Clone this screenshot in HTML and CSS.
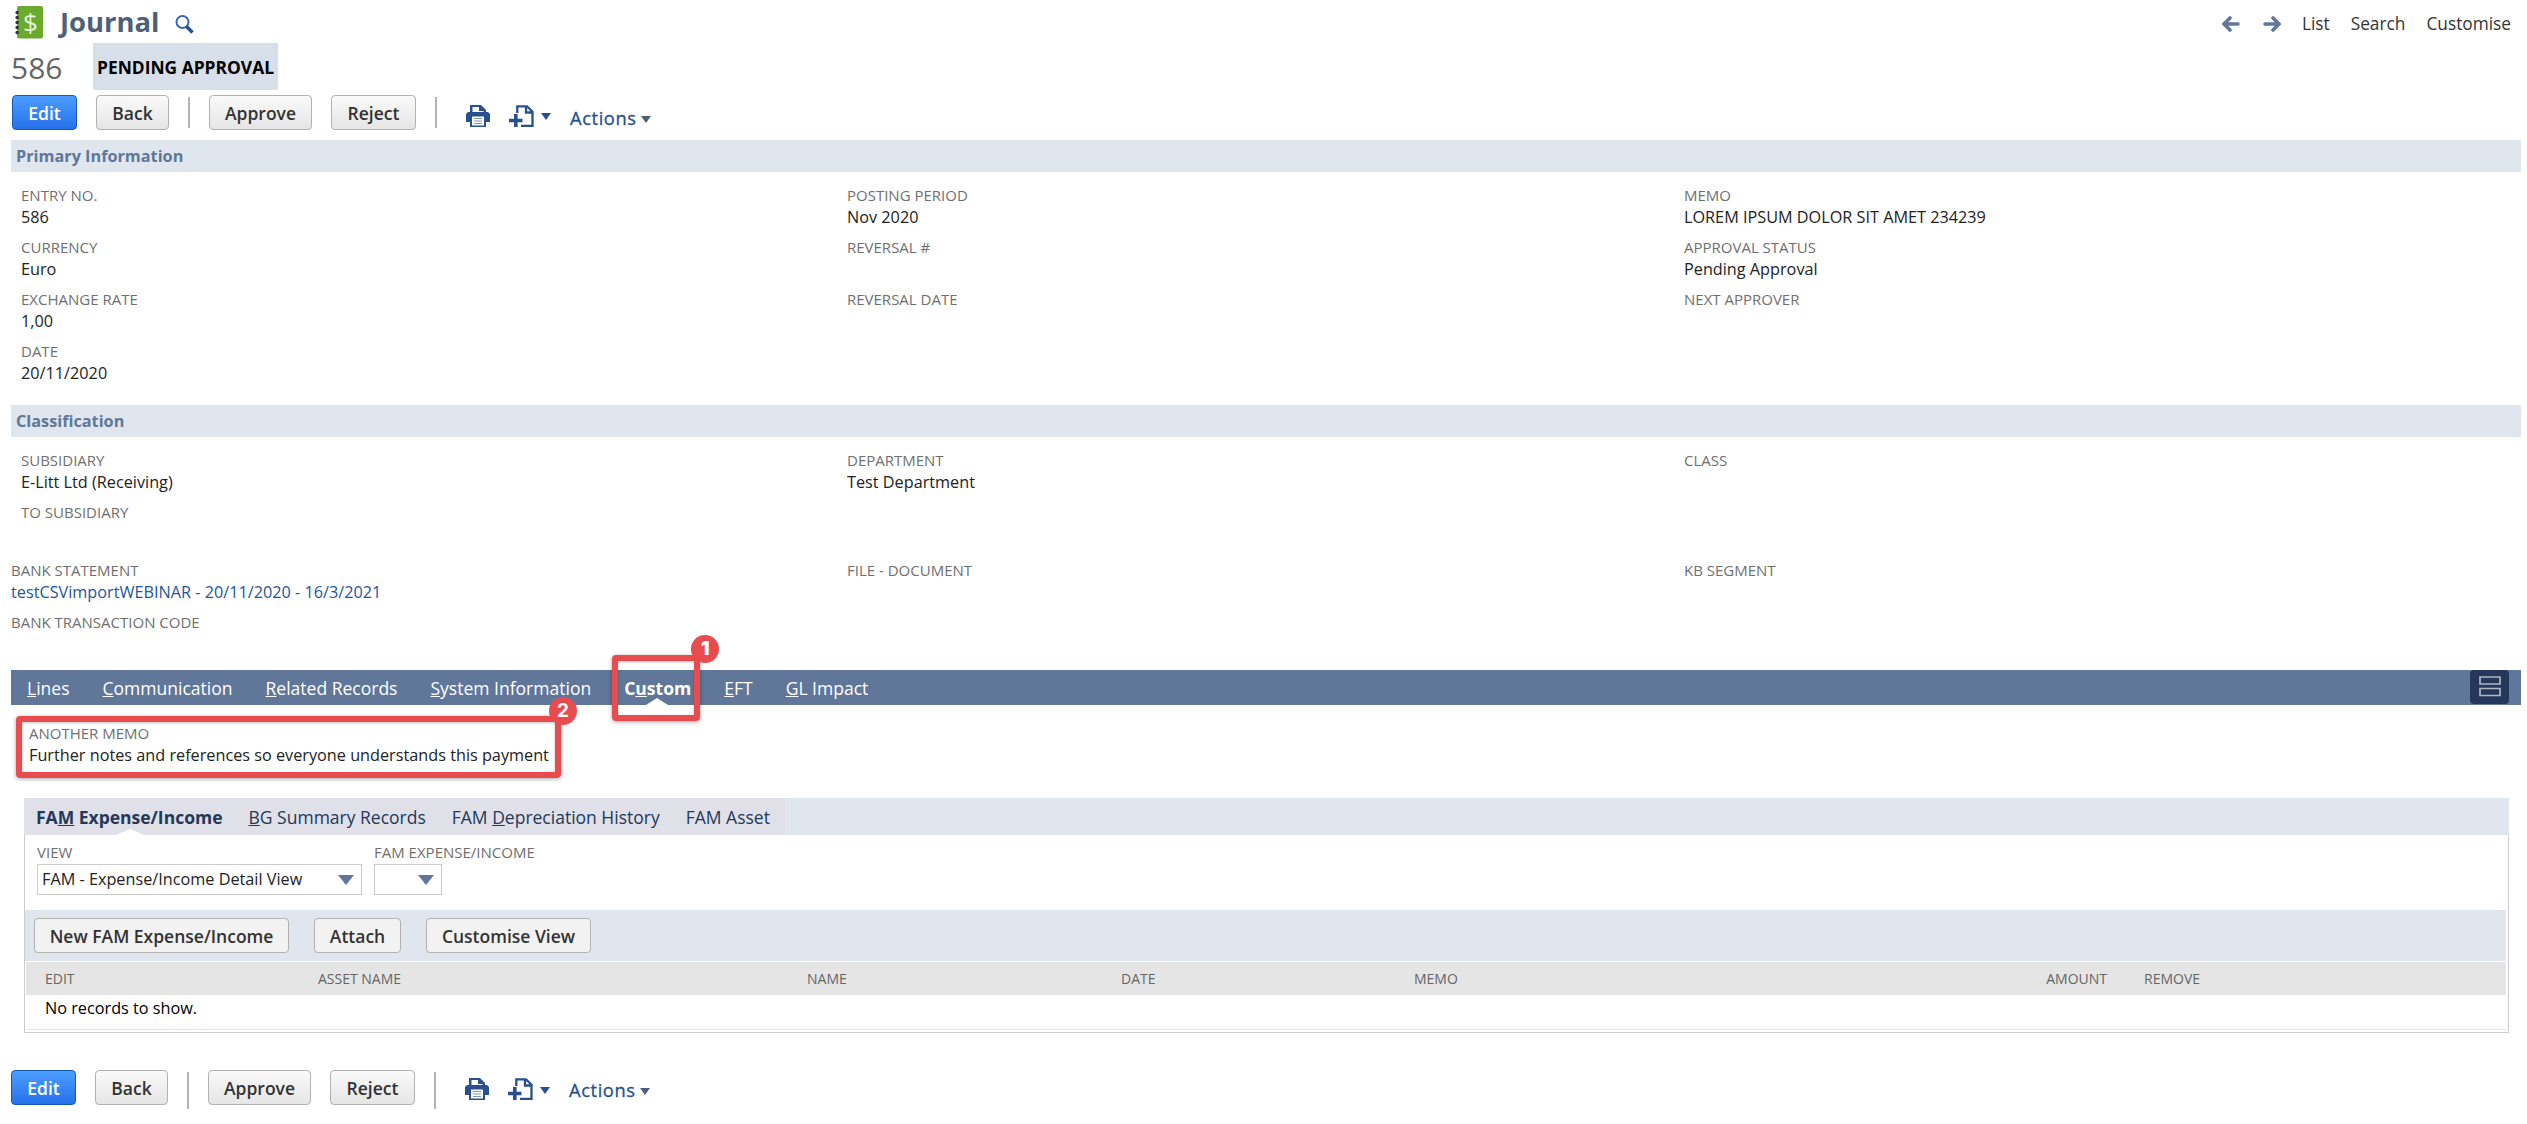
FILE: index.html
```html
<!DOCTYPE html>
<html lang="en">
<head>
  <meta charset="UTF-8">
  <title>Journal</title>
  <link rel="stylesheet" href="styles.css">
</head>
<body>
  <!-- icons used in both toolbars -->
  <svg class="icon-defs" width="0" height="0">
    <symbol id="icon-print" viewBox="0 0 24 22">
      <path d="M4 0h11l5 5v4H4z" fill="#28508f"/>
      <path d="M6.500 2H13v4h4.500v2h-11z" fill="#fff"/>
      <path d="M2 7h20l2 2v8h-4v5H4v-5H0V9z" fill="#28508f"/>
      <path d="M6 11.500h12v9H6z" fill="#fff"/>
      <path d="M8 13.500h8M8 16h8M8 18.500h8" stroke="#7f98c0" stroke-width="1.200"/>
    </symbol>
    <symbol id="icon-new" viewBox="0 0 25 22">
      <path d="M8.300 8V1.300H18l5.500 5.500v14H12M17 1.500V7.500H23" fill="none" stroke="#28508f" stroke-width="2.300"/>
      <path d="M6.800 9v13M0 15.500h13.500" stroke="#28508f" stroke-width="3.600" fill="none"/>
    </symbol>
  </svg>

  <div class="header">
    <div class="title">
      <div class="journal-icon">
        <svg width="29" height="33" viewBox="0 0 29 33">
          <rect x="2" y="0" width="26" height="32.500" rx="2" fill="#6aaa2e"/>
          <g fill="#333">
            <circle cx="2.200" cy="6.500" r="1.800"/><circle cx="2.200" cy="11.500" r="1.800"/><circle cx="2.200" cy="16.500" r="1.800"/>
            <circle cx="2.200" cy="21.500" r="1.800"/><circle cx="2.200" cy="26.500" r="1.800"/>
          </g>
        </svg>
        <span>$</span>
      </div>
      <h1>Journal</h1>
      <svg class="search-icon" width="19" height="19" viewBox="0 0 19 19">
        <circle cx="7.500" cy="7" r="6" fill="none" stroke="#3f68a8" stroke-width="2"/>
        <path d="M11.500 11.500l6 6" stroke="#28508f" stroke-width="3.500"/>
      </svg>
    </div>
    <div class="nav">
      <svg width="18" height="16" viewBox="0 0 18 16"><path d="M8 2L2 8l6 6M2.500 8H16" fill="none" stroke="#607799" stroke-width="3.600" stroke-linecap="round"/></svg>
      <svg class="next" width="18" height="16" viewBox="0 0 18 16"><path d="M10 2l6 6-6 6M15.500 8H2" fill="none" stroke="#607799" stroke-width="3.600" stroke-linecap="round"/></svg>
      <span class="nav-list">List</span>
      <span class="nav-search">Search</span>
      <span>Customise</span>
    </div>
  </div>

  <div class="record">
    <span class="record-no">586</span>
    <span class="status">PENDING APPROVAL</span>
  </div>

  <div class="toolbar">
    <button class="btn edit-btn">Edit</button>
    <button class="btn back-btn">Back</button>
    <span class="sep"></span>
    <button class="btn approve-btn">Approve</button>
    <button class="btn reject-btn">Reject</button>
    <span class="sep sep-2"></span>
    <svg class="print-icon" width="24" height="22"><use href="#icon-print"/></svg>
    <svg class="new-icon" width="25" height="22"><use href="#icon-new"/></svg>
    <i class="caret"></i>
    <span class="actions">Actions</span>
    <i class="caret grey"></i>
  </div>

  <h2>Primary Information</h2>
  <div class="fields primary">
    <div>
      <div class="field"><label>ENTRY NO.</label><span>586</span></div>
      <div class="field"><label>CURRENCY</label><span>Euro</span></div>
      <div class="field"><label>EXCHANGE RATE</label><span>1,00</span></div>
      <div class="field"><label>DATE</label><span>20/11/2020</span></div>
    </div>
    <div>
      <div class="field"><label>POSTING PERIOD</label><span>Nov 2020</span></div>
      <div class="field"><label>REVERSAL #</label></div>
      <div class="field"><label>REVERSAL DATE</label></div>
    </div>
    <div>
      <div class="field"><label>MEMO</label><span>LOREM IPSUM DOLOR SIT AMET 234239</span></div>
      <div class="field"><label>APPROVAL STATUS</label><span>Pending Approval</span></div>
      <div class="field"><label>NEXT APPROVER</label></div>
    </div>
  </div>

  <h2>Classification</h2>
  <div class="fields classification">
    <div>
      <div class="field"><label>SUBSIDIARY</label><span>E-Litt Ltd (Receiving)</span></div>
      <div class="field"><label>TO SUBSIDIARY</label></div>
    </div>
    <div>
      <div class="field"><label>DEPARTMENT</label><span>Test Department</span></div>
    </div>
    <div>
      <div class="field"><label>CLASS</label></div>
    </div>
  </div>
  <div class="fields bank">
    <div>
      <div class="field"><label>BANK STATEMENT</label><a>testCSVimportWEBINAR - 20/11/2020 - 16/3/2021</a></div>
      <div class="field"><label>BANK TRANSACTION CODE</label></div>
    </div>
    <div>
      <div class="field"><label>FILE - DOCUMENT</label></div>
    </div>
    <div>
      <div class="field"><label>KB SEGMENT</label></div>
    </div>
  </div>

  <div class="tabs">
    <span><u>L</u>ines</span>
    <span><u>C</u>ommunication</span>
    <span><u>R</u>elated Records</span>
    <span><u>S</u>ystem Information</span>
    <span class="active">C<u>u</u>stom
      <div class="callout callout-custom"><b>1</b></div>
    </span>
    <span><u>E</u>FT</span>
    <span><u>G</u>L Impact</span>
    <div class="layout-btn">
      <svg width="22" height="21" viewBox="0 0 22 21"><path d="M1 1h20v7H1zM1 12.500h20v7H1z" fill="none" stroke="#b0b5c4" stroke-width="1.700"/></svg>
    </div>
  </div>

  <div class="another-memo">
    <div class="field"><label>ANOTHER MEMO</label><span>Further notes and references so everyone understands this payment</span></div>
    <div class="callout callout-memo"><b>2</b></div>
  </div>

  <div class="subtab-box">
    <div class="subtabs">
      <div class="subtab-items">
        <span class="active">FA<u>M</u> Expense/Income</span>
        <span><u>B</u>G Summary Records</span>
        <span>FAM <u>D</u>epreciation History</span>
        <span>FAM Asset</span>
      </div>
    </div>
    <div class="panel">
      <div class="filters">
        <div class="field"><label>VIEW</label><div class="select view-select">FAM - Expense/Income Detail View<i></i></div></div>
        <div class="field"><label>FAM EXPENSE/INCOME</label><div class="select fam-select"><i></i></div></div>
      </div>
      <div class="panel-buttons">
        <button class="btn new-btn">New FAM Expense/Income</button>
        <button class="btn attach-btn">Attach</button>
        <button class="btn view-btn">Customise View</button>
      </div>
      <table>
        <thead>
          <tr>
            <th class="c-edit">EDIT</th>
            <th class="c-asset">ASSET NAME</th>
            <th class="c-name">NAME</th>
            <th class="c-date">DATE</th>
            <th class="c-memo">MEMO</th>
            <th class="c-amount">AMOUNT</th>
            <th>REMOVE</th>
          </tr>
        </thead>
        <tbody>
          <tr><td colspan="7">No records to show.</td></tr>
        </tbody>
      </table>
    </div>
  </div>

  <div class="toolbar bottom">
    <button class="btn edit-btn">Edit</button>
    <button class="btn back-btn">Back</button>
    <span class="sep"></span>
    <button class="btn approve-btn">Approve</button>
    <button class="btn reject-btn">Reject</button>
    <span class="sep sep-2"></span>
    <svg class="print-icon" width="24" height="22"><use href="#icon-print"/></svg>
    <svg class="new-icon" width="25" height="22"><use href="#icon-new"/></svg>
    <i class="caret"></i>
    <span class="actions">Actions</span>
    <i class="caret grey"></i>
  </div>
</body>
</html>
```
FILE: styles.css
```css
* {
  box-sizing: border-box;
}

body {
  margin: 0;
  padding: 0 6px 0 11px;
  height: 1124px;
  overflow: hidden;
  font-family: "Open Sans", sans-serif;
  font-size: 16.240px;
  color: #222;
  background: #fff;
}

.icon-defs {
  display: block;
}

/* title row */
.header {
  display: flex;
  justify-content: space-between;
  height: 43px;
}

.title {
  display: flex;
}

.journal-icon {
  position: relative;
  width: 29px;
  margin: 6px 0 0 4px;
}

/* dollar sign lies over the notebook */
.journal-icon span {
  position: absolute;
  left: 8px;
  top: 0;
  font-size: 26px;
  line-height: 32px;
  color: #e6f5d8;
}

h1 {
  margin: 3px 0 0 16px;
  width: 102px;
  font-size: 27.400px;
  line-height: 38px;
  color: #4d5f79;
}

.search-icon {
  margin: 15px 0 0 13px;
}

.nav {
  display: flex;
  margin-right: 10px;
  padding-top: 12px;
  font-size: 17.300px;
  line-height: 24px;
  color: #333;
}

.nav svg {
  margin-top: 4px;
}

.nav .next {
  margin: 4px 21px 0 23px;
}

.nav-list, .nav-search {
  margin-right: 21px;
}

/* number and status */
.record {
  display: flex;
  height: 52px;
}

.record-no {
  width: 82px;
  font-size: 30px;
  line-height: 50px;
  color: #666;
}

.status {
  width: 185px;
  height: 47px;
  font-size: 17.400px;
  line-height: 49px;
  font-weight: bold;
  text-align: center;
  white-space: nowrap;
  color: #000;
  background: #d7dfe9;
}

/* buttons */
.toolbar {
  display: flex;
  height: 45px;
  padding-left: 1px;
}

.btn {
  height: 35px;
  padding: 0;
  border: 1px solid #b2b2b2;
  border-radius: 4px;
  font-family: inherit;
  font-size: 17.500px;
  line-height: 32px;
  font-weight: 600;
  white-space: nowrap;
  color: #333;
  background: linear-gradient(#fafafa, #e5e5e5);
}

.edit-btn {
  width: 65px;
  border-color: #125ab2;
  color: #fff;
  background: linear-gradient(#4c9dff, #2571ea);
}

.back-btn {
  width: 73px;
  margin-left: 19px;
}

.approve-btn {
  width: 103px;
}

.reject-btn {
  width: 85px;
  margin-left: 19px;
}

.sep {
  width: 2px;
  height: 31px;
  margin: 2px 19px 0;
  background: #b4b4b4;
}

.sep-2 {
  margin-right: 29px;
}

.print-icon {
  margin-top: 10px;
}

.new-icon {
  margin: 10px 7px 0 19px;
}

.caret {
  margin-top: 18px;
  height: 7px;
  border: 5px solid transparent;
  border-top: 7px solid #28508f;
  border-bottom: 0;
}

.caret.grey {
  margin-top: 21px;
  border-top-color: #4d5f79;
}

.actions {
  width: 71px;
  margin: 11px 0 0 19px;
  font-size: 18.300px;
  line-height: 24px;
  letter-spacing: 0.6px;
  -webkit-text-stroke: 0.3px #28508f;
  color: #28508f;
}

/* sections */
h2 {
  margin: 0;
  height: 32px;
  padding-left: 5px;
  font-size: 16.240px;
  line-height: 32px;
  color: #607799;
  background: #dfe6ee;
}

.fields {
  display: grid;
  grid-template-columns: 836px 837px 1fr;
}

.fields > :first-child {
  padding-left: 10px;
}

.primary {
  height: 233px;
  padding-top: 13px;
}

.classification {
  height: 110px;
  padding-top: 13px;
}

.bank {
  height: 123px;
  padding-top: 13px;
}

.bank > :first-child {
  padding-left: 0;
}

.field {
  height: 52px;
  white-space: nowrap;
}

.field label {
  display: block;
  height: 22px;
  font-size: 15px;
  line-height: 21px;
  color: #6f6f6f;
}

.field span, .field a {
  display: block;
  line-height: 21px;
}

.field a {
  color: #255599;
}

/* tab bar */
.tabs {
  display: flex;
  gap: 33px;
  height: 35px;
  padding-left: 16px;
  font-size: 17.530px;
  line-height: 37px;
  white-space: nowrap;
  color: #fff;
  background: #607799;
}

.tabs > span {
  height: 35px;
}

.tabs .active {
  position: relative;
  font-weight: bold;
}

.tabs .active::after {
  content: "";
  position: absolute;
  left: 22px;
  bottom: 0;
  border: 11px solid transparent;
  border-bottom: 7px solid #fff;
  border-top: 0;
}

.layout-btn {
  width: 39px;
  height: 34px;
  margin: 0 12px 0 auto;
  padding: 6px 0 0 9px;
  border-radius: 4px;
  line-height: 0;
  background: #24385b;
}

/* red numbered callouts */
.callout {
  position: absolute;
  z-index: 1;
  border: 6.500px solid #e84c4f;
  border-radius: 4px;
  box-shadow: 0 1px 4px rgba(0,0,0,0.35), inset 0 1px 3px rgba(0,0,0,0.25);
}

.callout b {
  position: absolute;
  width: 28px;
  height: 28px;
  border-radius: 50%;
  font-family: Inter, sans-serif;
  font-size: 19px;
  line-height: 28px;
  text-align: center;
  color: #fff;
  background: #e84c4f;
}

.callout-custom {
  left: -12px;
  top: -15px;
  width: 88px;
  height: 66px;
}

.callout-custom b {
  right: -25px;
  top: -26px;
}

.another-memo {
  position: relative;
  height: 93px;
  padding: 18px 0 0 18px;
}

.callout-memo {
  left: 5px;
  top: 11px;
  width: 545px;
  height: 62px;
}

.callout-memo b {
  right: -22px;
  top: -25px;
}

/* sublist */
.subtab-box {
  margin: 0 12px 0 13px;
}

.subtabs {
  height: 37px;
  background: #dfe6ee;
}

.subtab-items {
  display: flex;
  gap: 26px;
  width: 761px;
  height: 37px;
  padding-left: 12px;
  font-size: 17.500px;
  line-height: 38px;
  white-space: nowrap;
  color: #24385b;
  background: #dfe0e8;
}

.subtab-items .active {
  position: relative;
  font-weight: bold;
}

.subtab-items .active::after {
  content: "";
  position: absolute;
  left: 80px;
  bottom: 0;
  border: 14px solid transparent;
  border-bottom: 6px solid #fff;
  border-top: 0;
}

.panel {
  height: 198px;
  padding-right: 2px;
  border: 1px solid #ccc;
  border-top: 0;
}

.filters {
  display: flex;
  gap: 12px;
  height: 75px;
  padding: 7px 0 0 12px;
}

.select {
  position: relative;
  height: 31px;
  padding-left: 4px;
  border: 1px solid #ccc;
  line-height: 29px;
}

.view-select {
  width: 325px;
}

.fam-select {
  width: 68px;
}

.select i {
  position: absolute;
  right: 7px;
  top: 10px;
  border: 8px solid transparent;
  border-top: 10px solid #607799;
  border-bottom: 0;
}

.panel-buttons {
  display: flex;
  gap: 25px;
  height: 51px;
  padding: 8px 0 0 9px;
  background: #dfe6ee;
}

.panel-buttons .btn {
  background: #f2f2f2;
}

.new-btn {
  width: 255px;
}

.attach-btn {
  width: 87px;
}

.view-btn {
  width: 165px;
}

table {
  width: 2480px;
  margin: 1px 0 0 1px;
  table-layout: fixed;
  border-collapse: collapse;
  border-bottom: 1px solid #e5e5e5;
}

th {
  height: 33px;
  padding: 0;
  font-size: 14px;
  font-weight: normal;
  text-align: left;
  color: #666;
  background: #e5e5e5;
}

td {
  height: 34px;
  padding: 0 0 8px 19px;
  line-height: 22px;
  color: #000;
}

.c-edit {
  width: 292px;
  padding-left: 19px;
}

.c-asset {
  width: 489px;
}

.c-name {
  width: 314px;
}

.c-date {
  width: 293px;
}

.c-memo {
  width: 500px;
}

.c-amount {
  width: 230px;
  padding-right: 37px;
  text-align: right;
}

/* bottom buttons */
.bottom {
  margin-top: 37px;
  padding-left: 0;
}

.bottom .sep {
  height: 37px;
}

.bottom .print-icon, .bottom .new-icon {
  margin-top: 8px;
}

.bottom .caret {
  margin-top: 17px;
}

.bottom .caret.grey {
  margin-top: 18px;
}

.bottom .actions {
  margin-top: 8px;
}
```
